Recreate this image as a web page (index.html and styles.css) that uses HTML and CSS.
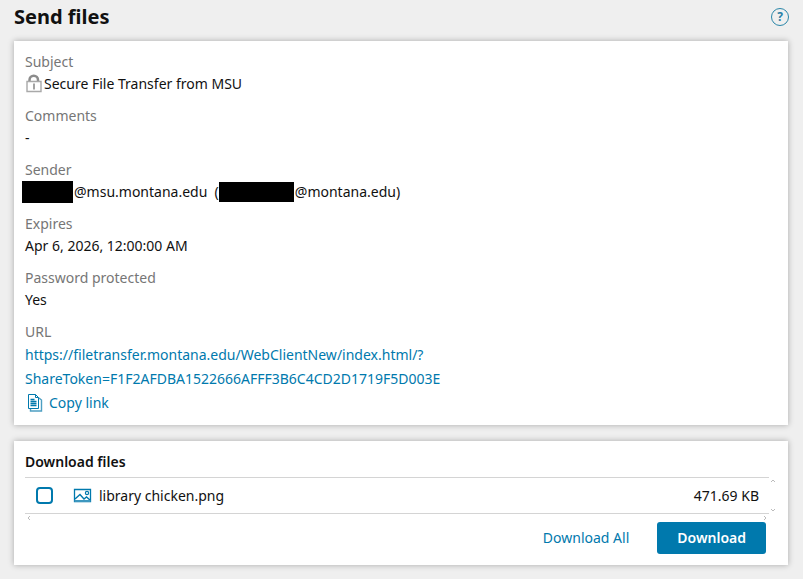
FILE: index.html
```html
<!DOCTYPE html>
<html lang="en">
<head>
  <meta charset="UTF-8">
  <meta name="viewport" content="width=device-width, initial-scale=1">
  <title>Send files</title>
  <link rel="stylesheet" href="styles.css">
</head>
<body>

<header class="page-header">
  <h1>Send files</h1>
  <button class="help" type="button" aria-label="Help">?</button>
</header>

<main>
  <section class="card">
    <dl class="details">
      <div class="field">
        <dt>Subject</dt>
        <dd>
          <svg width="19" height="22" viewBox="0 0 19 22" fill="none" stroke="#8c8c8c">
            <path d="M4.500 8.500V7a4 4 0 0 1 8.500 0v1.500" stroke-width="2.500"/>
            <path d="M2 8.500h14v10H2z" stroke="#a9a9a9" stroke-width="1.400"/>
            <path d="M9 10.500v6" stroke-width="1.600"/>
          </svg>
          Secure File Transfer from MSU
        </dd>
      </div>
      <div class="field">
        <dt>Comments</dt>
        <dd>-</dd>
      </div>
      <div class="field">
        <dt>Sender</dt>
        <dd>
          <span class="redacted user"></span>
          <span>@msu.montana.edu&nbsp;&nbsp;(</span>
          <span class="redacted email"></span>
          <span>@montana.edu)</span>
        </dd>
      </div>
      <div class="field">
        <dt>Expires</dt>
        <dd>Apr 6, 2026, 12:00:00 AM</dd>
      </div>
      <div class="field">
        <dt>Password protected</dt>
        <dd>Yes</dd>
      </div>
      <div class="field">
        <dt>URL</dt>
        <dd class="url">
          <a href="#">https://filetransfer.montana.edu/WebClientNew/index.html/?<wbr>ShareToken=F1F2AFDBA1522666AFFF3B6C4CD2D1719F5D003E</a>
        </dd>
      </div>
    </dl>
    <button class="copy-link" type="button">
      <svg width="16" height="18" viewBox="0 0 16 18" fill="none" stroke="#0079ad">
        <path d="M1.500.5h7l3 3v11h-10z"/>
        <path d="M8.500.5v3h3"/>
        <path d="M3.500 5.500h4M3.500 7.500h6M3.500 9.500h6M3.500 11.500h6" stroke-width="1.400"/>
        <path d="M12 4l2.500 2v11h-11v-2" stroke="#4d9fc2" stroke-width="1.400"/>
      </svg>
      Copy link
    </button>
  </section>

  <section class="card">
    <h2>Download files</h2>
    <div class="file-list">
      <table>
        <tr>
          <td class="check"><input type="checkbox" id="file1"></td>
          <td>
            <label for="file1">
              <svg width="19" height="16" viewBox="0 0 19 16" fill="none" stroke="#0079ad">
                <path d="M1.500 1.500h16v12h-16z" stroke-width="1.300"/>
                <path d="M2 11l5-4.500 4 4.500 2.500-2 4 3.500" stroke-width="1.400"/>
                <path d="M1.500 13h16" stroke="#3d97bf" stroke-width="2"/>
                <circle cx="14" cy="5" r="1.600" stroke-width="1.200"/>
              </svg>
              library chicken.png
            </label>
          </td>
          <td class="size">471.69 KB</td>
        </tr>
      </table>
      <div class="scroll-y">
        <svg width="4" height="3" viewBox="0 0 4 3"><path d="M0 3l2-2 2 2"/></svg>
        <svg width="4" height="3" viewBox="0 0 4 3"><path d="M0 0l2 2 2-2"/></svg>
      </div>
      <div class="scroll-x">
        <svg width="3" height="4" viewBox="0 0 3 4"><path d="M3 0L1 2l2 2"/></svg>
        <svg width="3" height="4" viewBox="0 0 3 4"><path d="M0 0l2 2-2 2"/></svg>
      </div>
    </div>
    <div class="actions">
      <button class="btn" type="button">Download All</button>
      <button class="btn btn-primary" type="button">Download</button>
    </div>
  </section>
</main>

</body>
</html>
```
FILE: styles.css
```css
* {
  box-sizing: border-box;
}

body {
  margin: 0;
  background: #efefef;
  color: #111;
  font-family: 'Noto Sans', sans-serif;
  font-size: 14px;
  line-height: 22px;
}

button {
  padding: 0;
  border: none;
  background: none;
  font: inherit;
  cursor: pointer;
}

.page-header {
  display: flex;
  justify-content: space-between;
  align-items: center;
  padding: 3px 14px 10px;
}

h1 {
  margin: 0;
  font-size: 20px;
  line-height: 28px;
}

.help {
  width: 18px;
  height: 18px;
  border: 1px solid #2a86a8;
  border-radius: 50%;
  color: #2a7fa5;
  font-size: 12px;
  font-weight: 700;
  line-height: 16px;
}

main {
  display: flex;
  flex-direction: column;
  gap: 16px;
  padding: 0 15px 14px 14px;
}

.card {
  padding: 10px 11px;
  background: #fff;
  box-shadow: 0 0 6px rgba(0, 0, 0, 0.3);
}

.details {
  margin: 0;
}

.field {
  margin-bottom: 10px;
}

.field:last-child {
  margin-bottom: 0;
}

dt {
  color: #767676;
}

dd {
  display: flex;
  align-items: center;
  margin: 0;
}

.redacted {
  height: 20px;
  margin-right: 1px;
  background: #000;
}

.user {
  width: 51px;
  height: 22px;
  margin-left: -3px;
}

.email {
  width: 75px;
}

.url {
  display: block;
  max-width: 440px;
  line-height: 24px;
}

.url a {
  color: #0079ad;
  text-decoration: none;
}

.copy-link {
  display: flex;
  align-items: center;
  gap: 6px;
  padding-left: 2px;
  color: #0079ad;
  line-height: 24px;
}

h2 {
  margin: 0;
  padding-bottom: 4px;
  font-size: 14px;
  font-weight: 600;
}

.file-list {
  display: grid;
  grid-template-columns: 1fr 8px;
}

table {
  width: 100%;
  border-collapse: collapse;
}

td {
  height: 36px;
  padding: 0;
  border-top: 1px solid #d4d4d4;
  border-bottom: 1px solid #d4d4d4;
}

td label {
  display: flex;
  align-items: center;
  gap: 7px;
}

.check {
  width: 48px;
  padding-left: 11px;
}

.check input {
  display: block;
  appearance: none;
  width: 17px;
  height: 17px;
  margin: 0;
  border: 2px solid #0079ad;
  border-radius: 4px;
}

.check input:checked {
  background: #0079ad;
}

.size {
  padding-right: 10px;
  text-align: right;
}

.scroll-y,
.scroll-x {
  display: flex;
  justify-content: space-between;
  fill: none;
  stroke: #bbb;
}

.scroll-y {
  flex-direction: column;
  align-items: center;
  padding: 2px 0;
}

.scroll-x {
  align-items: center;
  height: 8px;
  padding: 0 2px;
}

.actions {
  display: flex;
  justify-content: flex-end;
  padding: 0 11px 1px 0;
}

.btn {
  height: 32px;
  padding: 0 28px;
  border-radius: 3px;
  color: #0079ad;
}

.btn-primary {
  padding: 0 20px;
  background: #0079ad;
  color: #fff;
  font-weight: 600;
}
```
